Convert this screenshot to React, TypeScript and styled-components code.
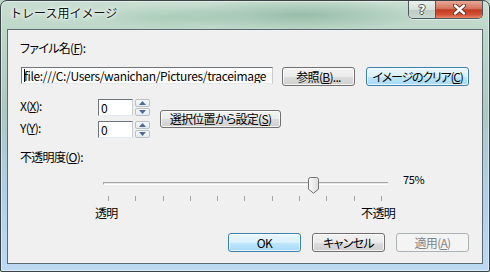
import React from "react";
import styled, { createGlobalStyle, css } from "styled-components";

const Global = createGlobalStyle`
  html, body { margin: 0; padding: 0; background: #bcd6c8; }
  body { width: 490px; height: 272px; overflow: hidden; }
  * { box-sizing: border-box; }
`;

const UI_FONT = `"Noto Sans CJK JP", "Noto Sans", sans-serif`;

const Window = styled.div`
  width: 490px;
  height: 272px;
  display: flex;
  flex-direction: column;
  border: 1px solid #3a4348;
  border-radius: 7px 7px 2px 2px;
  overflow: hidden;
  background:
    radial-gradient(ellipse 130px 16px at 300px 14px, rgba(110, 160, 135, 0.5), transparent),
    radial-gradient(ellipse 80px 12px at 170px 16px, rgba(140, 185, 160, 0.4), transparent),
    linear-gradient(180deg, #c8ded1 0px, #bdd7c8 30px, #acc8c2 110px, #b0cfe6 190px, #bddaf2 272px);
  box-shadow: inset 0 0 0 1px rgba(255, 255, 255, 0.45);
`;

const TitleBar = styled.div`
  height: 28px;
  display: flex;
  align-items: flex-start;
  padding: 0 6px 0 9px;
  flex-shrink: 0;
`;

const Title = styled.div`
  font-family: "Noto Sans CJK JP", sans-serif;
  font-size: 12px;
  line-height: 14px;
  margin-top: 5px;
  color: #111;
  text-shadow: 0 0 6px #fff, 0 0 4px #fff, 0 0 2px #fff;
  flex: 1;
`;

const CaptionGroup = styled.div`
  display: flex;
  height: 18px;
  border: 1px solid #4d5a60;
  border-top: none;
  border-radius: 0 0 5px 5px;
  overflow: hidden;
  box-shadow: 0 1px 0 rgba(255, 255, 255, 0.5);
`;

const CaptionButton = styled.div<{ $kind: "help" | "close" }>`
  display: flex;
  align-items: center;
  justify-content: center;
  height: 100%;
  ${(p) =>
    p.$kind === "help"
      ? css`
          width: 27px;
          border-right: 1px solid #4d5a60;
          background: linear-gradient(180deg, #eaf1ed 0%, #d4e1da 50%, #bccbc4 51%, #c9d8d1 100%);
        `
      : css`
          width: 46px;
          background: linear-gradient(180deg, #e9a897 0%, #d3735c 45%, #c23b20 52%, #d25234 80%, #e6866a 100%);
        `}
`;

const HelpGlyph = styled.span`
  font-family: "DejaVu Sans", sans-serif;
  font-weight: bold;
  font-size: 12px;
  line-height: 12px;
  color: #fff;
  text-shadow: -1px 0 #4a5458, 1px 0 #4a5458, 0 -1px #4a5458, 0 1px #4a5458;
`;

const Frame = styled.div`
  flex: 1;
  display: flex;
  padding: 0 6px 7px 6px;
`;

const Client = styled.div`
  flex: 1;
  border: 1px solid #5c6a72;
  background: #f0f0f0;
  display: flex;
  flex-direction: column;
  padding: 11px 13px 0 12px;
  font-family: ${UI_FONT};
  font-feature-settings: "palt";
  font-size: 12px;
  line-height: 14px;
  letter-spacing: -0.7px;
  color: #000;
`;

const Mn = styled.span`
  text-decoration: underline;
  text-underline-offset: 1px;
`;

const FieldLabel = styled.div<{ $mt?: number }>`
  margin-top: ${(p) => p.$mt ?? 0}px;
  height: 14px;
  white-space: nowrap;
`;

const FileRow = styled.div`
  margin-top: 12px;
  display: flex;
  align-items: flex-start;
  padding-left: 1px;
`;

const TextBox = styled.div<{ $w: number; $h?: number }>`
  width: ${(p) => p.$w}px;
  height: ${(p) => p.$h ?? 17}px;
  border: 1px solid;
  border-color: #6f7479 #c9ccd1 #e3e9ef #6f7479;
  background: #fff;
  font-family: "Noto Sans CJK JP", sans-serif;
  font-size: 12px;
  line-height: 15px;
  letter-spacing: -0.35px;
  padding-left: 2px;
  white-space: nowrap;
  overflow: hidden;
  display: flex;
  align-items: center;
`;

const Caret = styled.span`
  display: inline-block;
  width: 1px;
  height: 13px;
  background: #000;
  margin-right: -1px;
`;

const Button = styled.div<{
  $w: number;
  $h?: number;
  $variant?: "normal" | "blue" | "disabled";
  $ml?: number;
  $tight?: boolean;
}>`
  width: ${(p) => p.$w}px;
  height: ${(p) => p.$h ?? 19}px;
  margin-left: ${(p) => p.$ml ?? 0}px;
  flex-shrink: 0;
  display: flex;
  align-items: center;
  justify-content: center;
  border-radius: 3px;
  border: 1px solid #707070;
  white-space: nowrap;
  letter-spacing: ${(p) => (p.$tight ? "-1.2px" : "-0.7px")};
  box-shadow: inset 0 0 0 1px rgba(255, 255, 255, 0.75);
  background: linear-gradient(180deg, #f2f2f2 0%, #ebebeb 50%, #dddddd 51%, #cfcfcf 100%);
  color: #000;
  ${(p) =>
    p.$variant === "blue" &&
    css`
      border-color: #3c7fb1;
      background: linear-gradient(180deg, #eaf6fd 0%, #d9f0fc 50%, #bee6fd 51%, #a7d9f5 100%);
    `}
  ${(p) =>
    p.$variant === "disabled" &&
    css`
      border-color: #adb2b5;
      background: #f4f4f4;
      color: #838383;
      box-shadow: none;
    `}
`;

const PosSection = styled.div`
  margin-top: 13px;
  display: flex;
  align-items: center;
`;

const CoordGrid = styled.div`
  display: grid;
  grid-template-columns: 76px 35px 15px;
  grid-auto-rows: 17px;
  row-gap: 5px;
  column-gap: 2px;
  align-items: center;
`;

const CoordLabel = styled.div`
  height: 14px;
  margin-top: -4px;
`;

const Spinner = styled.div`
  display: flex;
  flex-direction: column;
  gap: 1px;
  height: 17px;
`;

const SpinHalf = styled.div`
  flex: 1;
  display: flex;
  align-items: center;
  justify-content: center;
  border: 1px solid #b9c0c8;
  border-radius: 2px;
  background: linear-gradient(180deg, #f7f9fb 0%, #e6ebf1 100%);
`;

const SliderRow = styled.div`
  margin-top: 8px;
  display: flex;
  align-items: flex-start;
  padding-left: 83px;
`;

const Slider = styled.div`
  position: relative;
  width: 285px;
  padding-top: 10px;
`;

const Track = styled.div`
  height: 3px;
  border-top: 1px solid #a7a7a7;
  border-left: 1px solid #a7a7a7;
  background: #e7eaea;
  border-bottom: 1px solid #ffffff;
`;

const Ticks = styled.div`
  margin-top: 11px;
  display: flex;
  justify-content: space-between;
  padding: 0 6px 0 5px;
`;

const Tick = styled.div`
  width: 1px;
  height: 5px;
  background: #a3a3a3;
`;

const Thumb = styled.svg`
  position: absolute;
  top: 5px;
`;

const ValueLabel = styled.div`
  margin-left: 15px;
  font-size: 11px;
  letter-spacing: -0.3px;
`;

const EndLabels = styled.div`
  margin-top: 5px;
  margin-left: 75px;
  width: 300px;
  display: flex;
  justify-content: space-between;
`;

const Footer = styled.div`
  margin-top: 13px;
  display: flex;
  justify-content: flex-end;
  gap: 11px;
`;

const ArrowSvg = ({ up }: { up: boolean }) => (
  <svg width="7" height="4" viewBox="0 0 7 4">
    <path d={up ? "M0 4 L3.5 0 L7 4 Z" : "M0 0 L3.5 4 L7 0 Z"} fill="#4f6a94" />
  </svg>
);

const Spin = () => (
  <Spinner>
    <SpinHalf>
      <ArrowSvg up />
    </SpinHalf>
    <SpinHalf>
      <ArrowSvg up={false} />
    </SpinHalf>
  </Spinner>
);

const TICKS = Array.from({ length: 11 }, (_, i) => i);

export default function App() {
  const value = 75;
  const thumbLeft = 5 + (value / 100) * 273 - 5;
  return (
    <>
      <Global />
      <Window>
        <TitleBar>
          <Title>トレース用イメージ</Title>
          <CaptionGroup>
            <CaptionButton $kind="help">
              <HelpGlyph>?</HelpGlyph>
            </CaptionButton>
            <CaptionButton $kind="close">
              <svg width="13" height="11" viewBox="0 0 13 11">
                <path d="M2 1.5 L11 9.5 M11 1.5 L2 9.5" stroke="#5a2b22" strokeWidth="4.2" strokeLinecap="round" />
                <path d="M2 1.5 L11 9.5 M11 1.5 L2 9.5" stroke="#ffffff" strokeWidth="2.4" strokeLinecap="round" />
              </svg>
            </CaptionButton>
          </CaptionGroup>
        </TitleBar>
        <Frame>
          <Client>
            <FieldLabel>
              ファイル名(<Mn>F</Mn>):
            </FieldLabel>
            <FileRow>
              <TextBox $w={252}>
                <Caret />
                file:///C:/Users/wanichan/Pictures/traceimage
              </TextBox>
              <Button $w={73} $ml={9}>
                参照(<Mn>B</Mn>)...
              </Button>
              <Button $w={103} $ml={11} $variant="blue" $tight>
                イメージのクリア(<Mn>C</Mn>)
              </Button>
            </FileRow>
            <PosSection>
              <CoordGrid>
                <CoordLabel>
                  X(<Mn>X</Mn>):
                </CoordLabel>
                <TextBox $w={35}>0</TextBox>
                <Spin />
                <CoordLabel>
                  Y(<Mn>Y</Mn>):
                </CoordLabel>
                <TextBox $w={35}>0</TextBox>
                <Spin />
              </CoordGrid>
              <Button $w={121} $h={18} $ml={10}>
                選択位置から設定(<Mn>S</Mn>)
              </Button>
            </PosSection>
            <FieldLabel $mt={12}>
              不透明度(<Mn>O</Mn>):
            </FieldLabel>
            <SliderRow>
              <Slider>
                <Track />
                <Ticks>
                  {TICKS.map((t) => (
                    <Tick key={t} />
                  ))}
                </Ticks>
                <Thumb width="11" height="17" viewBox="0 0 11 17" style={{ left: thumbLeft }}>
                  <defs>
                    <linearGradient id="tg" x1="0" y1="0" x2="1" y2="0">
                      <stop offset="0" stopColor="#fbfbfb" />
                      <stop offset="1" stopColor="#dcdcdc" />
                    </linearGradient>
                  </defs>
                  <path
                    d="M0.5 2.5 Q0.5 0.5 2.5 0.5 H8.5 Q10.5 0.5 10.5 2.5 V12.2 L5.5 16.2 L0.5 12.2 Z"
                    fill="url(#tg)"
                    stroke="#727272"
                  />
                </Thumb>
              </Slider>
              <ValueLabel>75%</ValueLabel>
            </SliderRow>
            <EndLabels>
              <span>透明</span>
              <span>不透明</span>
            </EndLabels>
            <Footer>
              <Button $w={73} $variant="blue">
                OK
              </Button>
              <Button $w={73}>キャンセル</Button>
              <Button $w={73} $variant="disabled">
                適用(<Mn>A</Mn>)
              </Button>
            </Footer>
          </Client>
        </Frame>
      </Window>
    </>
  );
}
